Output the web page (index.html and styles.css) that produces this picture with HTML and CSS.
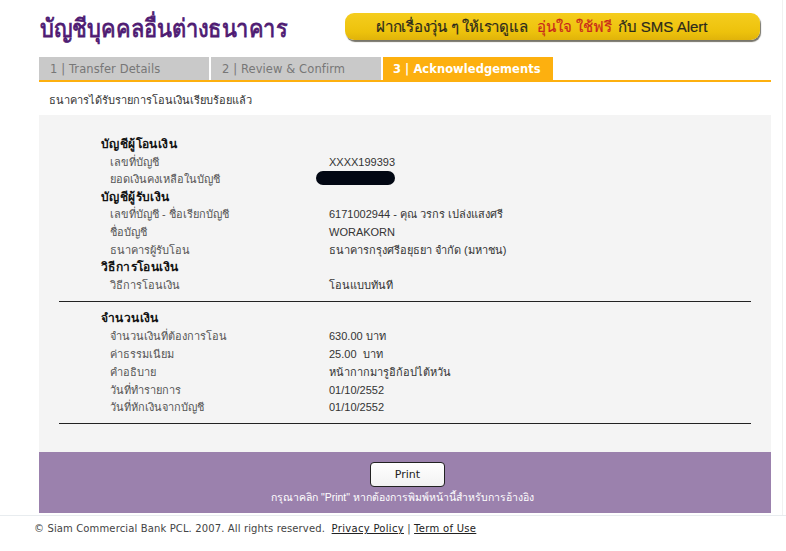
FILE: index.html
```html
<!DOCTYPE html>
<html lang="th">
<head>
<meta charset="utf-8">
<title>บัญชีบุคคลอื่นต่างธนาคาร</title>
<link rel="stylesheet" href="styles.css">
</head>
<body>
<div class="page">
  <main class="wrap">
    <header class="head">
      <div class="title-box"><h1 class="title">บัญชีบุคคลอื่นต่างธนาคาร</h1></div>
      <div class="banner"><span class="lead">ฝากเรื่องวุ่น ๆ ให้เราดูแล</span><em class="hot">อุ่นใจ ใช้ฟรี</em>กับ SMS Alert</div>
    </header>
    <nav class="tabs">
      <div class="tab">1 | Transfer Details</div>
      <div class="tab">2 | Review &amp; Confirm</div>
      <div class="tab tab-on">3 | Acknowledgements</div>
    </nav>
    <p class="msg">ธนาคารได้รับรายการโอนเงินเรียบร้อยแล้ว</p>
    <section class="panel">
      <div class="group group-a">
        <div class="row head-row"><span>บัญชีผู้โอนเงิน</span></div>
        <div class="row"><span>เลขที่บัญชี</span><span>XXXX199393</span></div>
        <div class="row"><span>ยอดเงินคงเหลือในบัญชี</span><span><i class="redact"></i></span></div>
        <div class="row head-row"><span>บัญชีผู้รับเงิน</span></div>
        <div class="row"><span>เลขที่บัญชี - ชื่อเรียกบัญชี</span><span>6171002944 - คุณ วรกร เปล่งแสงศรี</span></div>
        <div class="row"><span>ชื่อบัญชี</span><span>WORAKORN</span></div>
        <div class="row"><span>ธนาคารผู้รับโอน</span><span>ธนาคารกรุงศรีอยุธยา จำกัด (มหาชน)</span></div>
        <div class="row head-row"><span>วิธีการโอนเงิน</span></div>
        <div class="row"><span>วิธีการโอนเงิน</span><span>โอนแบบทันที</span></div>
      </div>
      <div class="group group-b">
        <div class="row head-row"><span>จำนวนเงิน</span></div>
        <div class="row"><span>จำนวนเงินที่ต้องการโอน</span><span>630.00 บาท</span></div>
        <div class="row"><span>ค่าธรรมเนียม</span><span>25.00&nbsp; บาท</span></div>
        <div class="row"><span>คำอธิบาย</span><span>หน้ากากมารูอิก้อปไต้หวัน</span></div>
        <div class="row"><span>วันที่ทำรายการ</span><span>01/10/2552</span></div>
        <div class="row"><span>วันที่หักเงินจากบัญชี</span><span>01/10/2552</span></div>
      </div>
    </section>
    <section class="action">
      <button class="print" type="button">Print</button>
      <p class="hint">กรุณาคลิก "Print" หากต้องการพิมพ์หน้านี้สำหรับการอ้างอิง</p>
    </section>
  </main>
  <footer class="foot">© Siam Commercial Bank PCL. 2007. All rights reserved. &nbsp;<a href="#">Privacy Policy</a> | <a href="#">Term of Use</a></footer>
</div>
</body>
</html>
```
FILE: styles.css
```css
html, body { margin: 0; padding: 0; background: #fff; }
body { font-family: "Liberation Sans", "Noto Sans", sans-serif; font-size: 11px; color: #333; }
.page { width: 786px; height: 551px; overflow: hidden; }
.wrap { width: 732px; margin-left: 39px; padding-right: 11px; border-right: 1px solid #f1f1f1; height: 515px; }
.head { height: 57px; display: flex; align-items: flex-start; }
.title-box { width: 306px; flex: none; }
.title { margin: 11px 0 0 1px; font-size: 25px; line-height: 34px; font-weight: 400; color: #4e1a72; -webkit-text-stroke: .8px #4e1a72; white-space: nowrap; transform: scaleX(.873); transform-origin: left center; }
.banner { margin-top: 13px; width: 415px; height: 27px; box-sizing: border-box; padding-left: 31px; border-radius: 9px; background: linear-gradient(#f5cd1e, #edc20c 70%, #e0b30a); box-shadow: 1px 2px 1px #77756a; font-size: 15px; line-height: 27px; color: #2c2a1c; -webkit-text-stroke: .2px #2c2a1c; white-space: nowrap; }
.lead { letter-spacing: -.25px; }
.hot { font-style: normal; color: #c9281c; -webkit-text-stroke: .2px #c9281c; letter-spacing: -.1px; margin: 0 6px 0 10px; }
.tabs { display: flex; gap: 2px; height: 23px; border-bottom: 2px solid #fdb00f; }
.tab { width: 170px; height: 23px; box-sizing: border-box; padding-left: 11px; background: #c9c9c9; color: #777; font: 11.5px/24px "DejaVu Sans", sans-serif; letter-spacing: .1px; }
.tab-on { background: #fdb00f; color: #fff; font-weight: 700; padding-left: 10px; letter-spacing: .05px; }
.msg { margin: 0; height: 33px; padding-left: 10px; font-size: 11px; line-height: 36px; color: #333; }
.panel { height: 337px; box-sizing: border-box; padding: 20px 20px 0; background: #f4f4f4; }
.group { border-bottom: 1px solid #222; padding-left: 42px; }
.group-a { padding-bottom: 8px; margin-bottom: 7px; }
.group-b { padding-bottom: 7px; }
.row { display: grid; grid-template-columns: 219px 1fr; height: 17.6px; line-height: 19px; padding-left: 9px; color: #555; white-space: nowrap; }
.group-b .row { height: 17.8px; }
.row span + span { color: #333; }
.head-row { padding-left: 0; font-size: 12px; line-height: 18px; letter-spacing: .4px; font-weight: 700; color: #111; }
.redact { display: inline-block; width: 79px; height: 14px; margin-left: -13px; border-radius: 7px; background: #020713; vertical-align: -2px; }
.action { height: 61px; background: #9b81ad; display: flex; flex-direction: column; align-items: center; padding-top: 10px; box-sizing: border-box; }
.print { width: 75px; height: 25px; margin-left: 5px; padding: 0; background: linear-gradient(#fff, #f2f2f2); border: 1px solid #222; border-radius: 4px; color: #222; font: 11px "DejaVu Sans", sans-serif; }
.hint { margin: 2px 5px 0 0; color: #fff; font-size: 10.5px; line-height: 16px; }
.foot { border-top: 1px solid #e8ecef; height: 35px; padding-left: 34px; font: 10px/25px "DejaVu Sans", sans-serif; letter-spacing: .13px; color: #444; }
.foot a { color: #222; letter-spacing: .3px; }
```
